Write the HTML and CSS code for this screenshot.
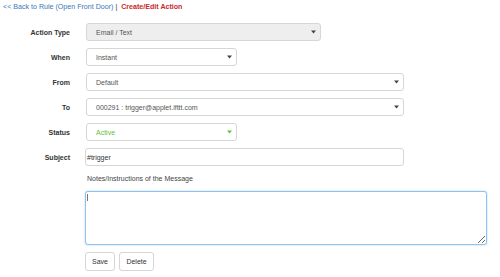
FILE: index.html
```html
<!DOCTYPE html>
<html>
<head>
<meta charset="utf-8">
<link rel="stylesheet" href="styles.css">
</head>
<body>
<div class="crumbs"><a class="back" href="#">&lt;&lt; Back to Rule (Open Front Door)</a> <span class="sep">|</span> <span class="title">Create/Edit Action</span></div>
<div class="form">
  <label class="lbl">Action Type</label>
  <div class="select disabled w-mid"><span>Email / Text</span><svg class="caret" width="5" height="4" viewBox="0 0 5 4"><path d="M0 0.5h5L2.5 3.5z"/></svg></div>

  <label class="lbl">When</label>
  <div class="select w-short"><span>Instant</span><svg class="caret" width="5" height="4" viewBox="0 0 5 4"><path d="M0 0.5h5L2.5 3.5z"/></svg></div>

  <label class="lbl">From</label>
  <div class="select w-long"><span>Default</span><svg class="caret" width="5" height="4" viewBox="0 0 5 4"><path d="M0 0.5h5L2.5 3.5z"/></svg></div>

  <label class="lbl">To</label>
  <div class="select w-long"><span>000291 : trigger@applet.ifttt.com</span><svg class="caret" width="5" height="4" viewBox="0 0 5 4"><path d="M0 0.5h5L2.5 3.5z"/></svg></div>

  <label class="lbl">Status</label>
  <div class="select w-short active"><span>Active</span><svg class="caret" width="5" height="4" viewBox="0 0 5 4"><path d="M0 0.5h5L2.5 3.5z"/></svg></div>

  <label class="lbl">Subject</label>
  <div class="input w-long">#trigger</div>

  <div class="notes">
    <div class="notes-label">Notes/Instructions of the Message</div>
    <div class="ta-wrap"><textarea class="ta"></textarea><span class="cursor"></span></div>
    <div class="buttons">
      <button class="btn save">Save</button>
      <button class="btn delete">Delete</button>
    </div>
  </div>
</div>
</body>
</html>
```
FILE: styles.css
```css
* { box-sizing: border-box; }
html, body { margin: 0; padding: 0; background: #fff; }
body {
  font-family: "Liberation Sans", Arial, sans-serif;
  font-size: 7px;
  color: #333;
  width: 500px;
  height: 277px;
  overflow: hidden;
}
.crumbs {
  padding: 3px 3px 0 3px;
  height: 14px;
  line-height: 8px;
  font-size: 7.1px;
}
.back { color: #3a76b8; text-decoration: none; }
.sep { color: #333; }
.title { color: #c8282b; font-weight: bold; margin-left: 2px; }

.form {
  margin-top: 9px;
  display: grid;
  grid-template-columns: 70px 1fr;
  column-gap: 16px;
  row-gap: 7px;
  align-items: center;
}
.lbl {
  text-align: right;
  font-weight: bold;
  color: #333;
  font-size: 7px;
}
.select, .input {
  height: 18px;
  border: 1px solid #d6d6d6;
  border-radius: 3px;
  background: #fff;
  display: flex;
  align-items: center;
  color: #555;
  font-size: 7px;
}
.select {
  padding: 0 4px 0 9px;
  justify-content: space-between;
}
.select.disabled { background: #eee; }
.select.active { color: #5ec243; }
.select.active .caret path { fill: #5ec243; }
.caret path { fill: #444; }
.caret { flex: none; }
.w-mid { width: 235px; }
.w-short { width: 151px; }
.w-long { width: 318px; }
.input { padding-left: 1px; color: #333; margin-left: -1px; width: 319px; }

.notes {
  grid-column: 2;
  margin-left: -1px;
}
.notes-label {
  height: 12px;
  line-height: 12px;
  padding-left: 2px;
  color: #444;
  font-size: 7px;
}
.ta-wrap {
  position: relative;
  margin-top: 6px;
  width: 402px;
  height: 54px;
}
.ta {
  display: block;
  width: 402px;
  height: 54px;
  border: 1px solid #8fc3ee;
  border-radius: 3px;
  box-shadow: 0 0 2px rgba(102,175,233,0.6);
  outline: none;
  resize: vertical;
  margin: 0;
  font-family: inherit;
}
.cursor {
  position: absolute;
  left: 2px;
  top: 3px;
  width: 1px;
  height: 7px;
  background: #777;
}
.buttons {
  margin-top: 7px;
  display: flex;
  gap: 4px;
}
.btn {
  height: 19px;
  padding: 0 5px;
  border: 1px solid #d6d6d6;
  border-radius: 3px;
  background: #fff;
  color: #333;
  font-family: inherit;
  font-size: 7px;
}
.save { width: 30px; }
.delete { width: 35px; }
```
